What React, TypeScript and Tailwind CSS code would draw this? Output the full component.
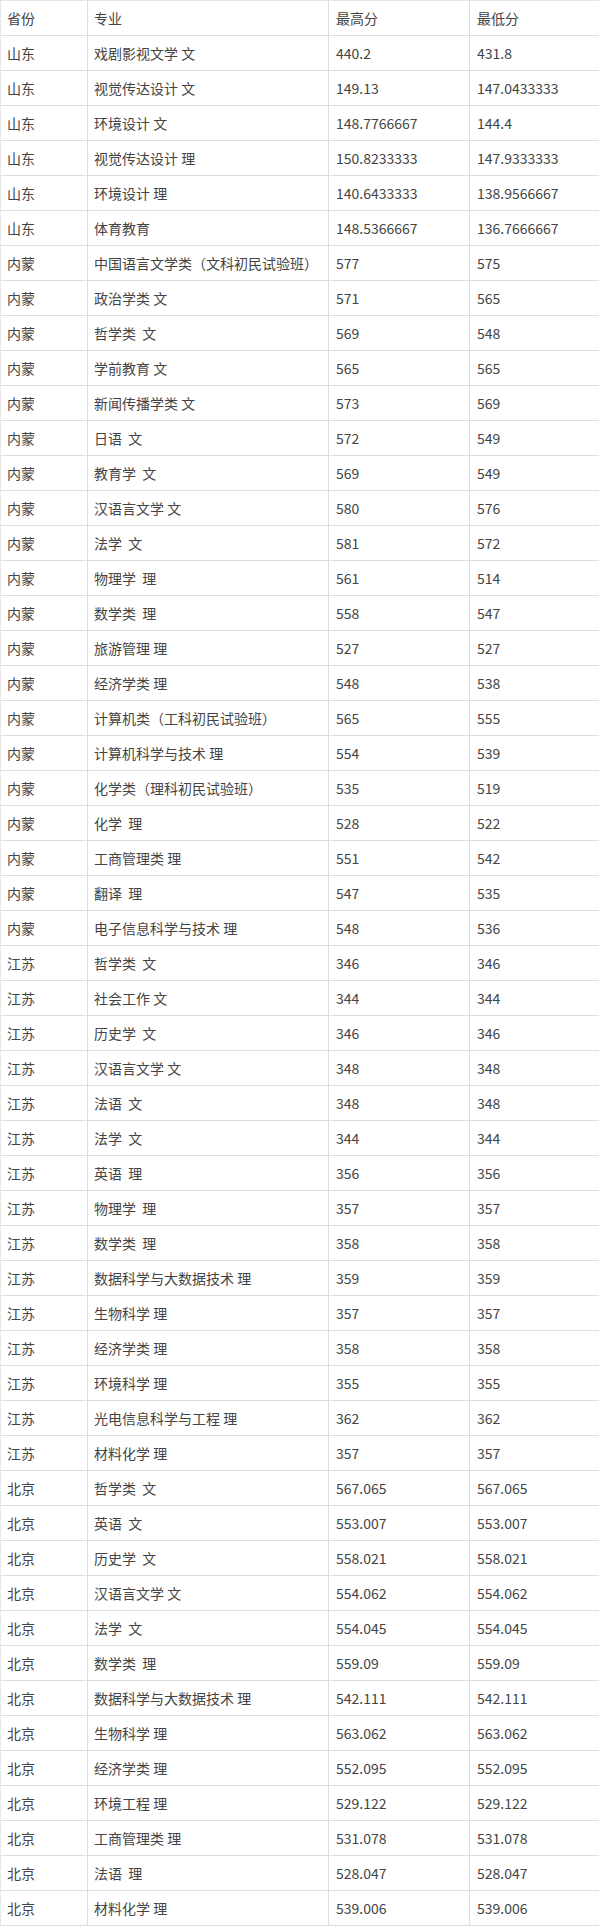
const rows: [string, string, string, string][] = [
  ["山东", "戏剧影视文学 文", "440.2", "431.8"],
  ["山东", "视觉传达设计 文", "149.13", "147.0433333"],
  ["山东", "环境设计 文", "148.7766667", "144.4"],
  ["山东", "视觉传达设计 理", "150.8233333", "147.9333333"],
  ["山东", "环境设计 理", "140.6433333", "138.9566667"],
  ["山东", "体育教育", "148.5366667", "136.7666667"],
  ["内蒙", "中国语言文学类（文科初民试验班）", "577", "575"],
  ["内蒙", "政治学类 文", "571", "565"],
  ["内蒙", "哲学类  文", "569", "548"],
  ["内蒙", "学前教育 文", "565", "565"],
  ["内蒙", "新闻传播学类 文", "573", "569"],
  ["内蒙", "日语  文", "572", "549"],
  ["内蒙", "教育学  文", "569", "549"],
  ["内蒙", "汉语言文学 文", "580", "576"],
  ["内蒙", "法学  文", "581", "572"],
  ["内蒙", "物理学  理", "561", "514"],
  ["内蒙", "数学类  理", "558", "547"],
  ["内蒙", "旅游管理 理", "527", "527"],
  ["内蒙", "经济学类 理", "548", "538"],
  ["内蒙", "计算机类（工科初民试验班）", "565", "555"],
  ["内蒙", "计算机科学与技术 理", "554", "539"],
  ["内蒙", "化学类（理科初民试验班）", "535", "519"],
  ["内蒙", "化学  理", "528", "522"],
  ["内蒙", "工商管理类 理", "551", "542"],
  ["内蒙", "翻译  理", "547", "535"],
  ["内蒙", "电子信息科学与技术 理", "548", "536"],
  ["江苏", "哲学类  文", "346", "346"],
  ["江苏", "社会工作 文", "344", "344"],
  ["江苏", "历史学  文", "346", "346"],
  ["江苏", "汉语言文学 文", "348", "348"],
  ["江苏", "法语  文", "348", "348"],
  ["江苏", "法学  文", "344", "344"],
  ["江苏", "英语  理", "356", "356"],
  ["江苏", "物理学  理", "357", "357"],
  ["江苏", "数学类  理", "358", "358"],
  ["江苏", "数据科学与大数据技术 理", "359", "359"],
  ["江苏", "生物科学 理", "357", "357"],
  ["江苏", "经济学类 理", "358", "358"],
  ["江苏", "环境科学 理", "355", "355"],
  ["江苏", "光电信息科学与工程 理", "362", "362"],
  ["江苏", "材料化学 理", "357", "357"],
  ["北京", "哲学类  文", "567.065", "567.065"],
  ["北京", "英语  文", "553.007", "553.007"],
  ["北京", "历史学  文", "558.021", "558.021"],
  ["北京", "汉语言文学 文", "554.062", "554.062"],
  ["北京", "法学  文", "554.045", "554.045"],
  ["北京", "数学类  理", "559.09", "559.09"],
  ["北京", "数据科学与大数据技术 理", "542.111", "542.111"],
  ["北京", "生物科学 理", "563.062", "563.062"],
  ["北京", "经济学类 理", "552.095", "552.095"],
  ["北京", "环境工程 理", "529.122", "529.122"],
  ["北京", "工商管理类 理", "531.078", "531.078"],
  ["北京", "法语  理", "528.047", "528.047"],
  ["北京", "材料化学 理", "539.006", "539.006"],
];

const Row = ({ cells }: { cells: [string, string, string, string] }) => (
  <div className="flex h-[35px] border-b border-[#dddddd]">
    <div className="w-[86px] shrink-0 pl-[6px] flex items-center">{cells[0]}</div>
    <div className="w-[241px] shrink-0 pl-[6px] flex items-center border-l border-[#dddddd] whitespace-pre">{cells[1]}</div>
    <div className="w-[141px] shrink-0 pl-[7px] flex items-center border-l border-[#dddddd]">{cells[2]}</div>
    <div className="w-[141px] shrink-0 pl-[7px] flex items-center border-l border-[#dddddd]">{cells[3]}</div>
  </div>
);

export default function App() {
  return (
    <div className="w-[599px] overflow-hidden bg-white">
      <div
        className="w-[610px] border-t border-l border-[#e6e6e6] text-[14px] text-[#444444]"
        style={{ fontFamily: '"Noto Sans CJK SC", "Noto Sans", sans-serif' }}
      >
        <Row cells={["省份", "专业", "最高分", "最低分"]} />
        {rows.map((r, i) => (
          <Row key={i} cells={r} />
        ))}
      </div>
    </div>
  );
}
